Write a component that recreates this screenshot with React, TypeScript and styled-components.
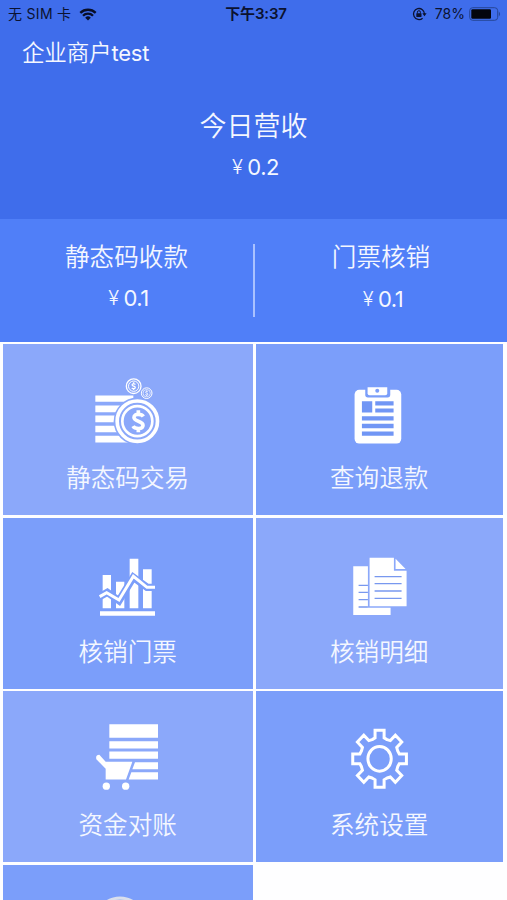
import React from "react";
import styled, { createGlobalStyle } from "styled-components";

const GlobalStyle = createGlobalStyle`
  * { box-sizing: border-box; }
  html, body { margin: 0; padding: 0; background: #fff; }
  body { overflow: hidden; font-family: Inter, "Noto Sans CJK SC", sans-serif; }
`;

const Screen = styled.main`
  width: 507px;
  height: 900px;
  overflow: hidden;
  background: #fefeff;
  color: #f4f7ff;
`;

const Hero = styled.header`
  height: 219px;
  background: #3f6deb;
`;

const StatusBar = styled.div`
  height: 28px;
  display: grid;
  grid-template-columns: 1fr auto 1fr;
  align-items: center;
  padding: 0 6px 0 8px;
  color: #0b1230;
  font-size: 14px;
  line-height: 28px;
`;

const StatusGroup = styled.div<{ $end?: boolean }>`
  display: flex;
  align-items: center;
  justify-content: ${(p) => (p.$end ? "flex-end" : "flex-start")};
  gap: ${(p) => (p.$end ? 4 : 8)}px;
  white-space: pre;

  svg:first-child {
    margin-right: 4px;
  }
`;

const CarrierName = styled.span`
  letter-spacing: 0.3px;
`;

const Clock = styled.div`
  font-size: 15px;
  font-weight: 600;
  letter-spacing: -0.15px;
  padding-left: 3px;
`;

const Merchant = styled.h1`
  margin: 9px 0 0 22px;
  font-size: 22.5px;
  line-height: 32px;
  font-weight: 350;
  letter-spacing: -0.15px;
`;

const MerchantCode = styled.span`
  font-size: 22px;
  font-weight: 400;
  letter-spacing: -0.2px;
`;

const Figure = styled.div<{ $top: number }>`
  display: flex;
  flex-direction: column;
  align-items: center;
  padding-top: ${(p) => p.$top}px;
`;

const FigureName = styled.div<{ $size: number }>`
  font-size: ${(p) => p.$size}px;
  line-height: 36px;
  font-weight: 350;
`;

const Amount = styled.div<{ $gap: number }>`
  display: flex;
  gap: 5px;
  margin-top: ${(p) => p.$gap}px;
  padding-left: 4px;
  font-size: 22px;
  line-height: 30px;
  font-weight: 400;
  letter-spacing: -0.5px;
`;

const Currency = styled.span`
  font-size: 20px;
  font-weight: 350;
`;

const Summary = styled.section`
  height: 123px;
  display: grid;
  grid-template-columns: 253px 2px 1fr;
  background: #507ff8;
`;

const Divider = styled.div`
  height: 73px;
  margin-top: 25px;
  background: #a9c1ff;
`;

const Tiles = styled.section`
  display: grid;
  grid-template-columns: 249.5px 247.5px;
  grid-auto-rows: 170.75px;
  gap: 2.75px 3px;
  padding: 2.4px 3.4px;
`;

const Tile = styled.div<{ $light?: boolean }>`
  display: flex;
  flex-direction: column;
  align-items: center;
  padding-top: 28.6px;
  background: ${(p) => (p.$light ? "#8ba8fa" : "#7b9efa")};
`;

const TileName = styled.div`
  margin: 7.4px 1px 0 0;
  font-size: 24.6px;
  line-height: 36px;
  font-weight: 350;
`;

const TileIcon = styled.svg`
  display: block;
  flex: none;
  width: 90px;
  height: 80px;
  overflow: visible;
`;

const WifiIcon = () => (
  <svg width="18" height="13" viewBox="0 0 18 13" fill="none" stroke="#080e28" strokeWidth="2.3">
    <path d="M1.3 4.9a11 11 0 0 1 15.4 0M4 7.8a7 7 0 0 1 10 0" />
    <path d="M6.2 9.7a4 4 0 0 1 5.6 0L9 12.5z" fill="#080e28" stroke="none" />
  </svg>
);

const RotationLockIcon = () => (
  <svg width="15" height="14" viewBox="0 0 15 14" fill="none" stroke="#0b1230">
    <path d="M10.6 11.2A5.5 5.5 0 1 1 12.5 7" strokeWidth="1.3" />
    <path d="M10.3 6.3h4.3l-2.1 2.9z" fill="#0b1230" stroke="none" />
    <rect x="4.3" y="6.2" width="5.2" height="3.8" rx=".4" fill="#0b1230" stroke="none" />
    <path d="M5.4 6.5V5.2a1.5 1.5 0 0 1 3 0v1.3" strokeWidth="1" />
  </svg>
);

const BatteryIcon = () => (
  <svg width="32" height="14" viewBox="0 0 32 14">
    <rect x=".7" y=".7" width="28" height="12.6" rx="3" fill="none" stroke="#264697" strokeWidth="1" />
    <rect x="2.3" y="2.3" width="19.7" height="9.4" rx="1.2" fill="#03050d" />
    <path d="M29.8 4.6q2.6 2.4 0 4.8z" fill="#264697" />
  </svg>
);

const Dollar = ({ x, y, scale = 1, width = 8 }: { x: number; y: number; scale?: number; width?: number }) => (
  <path
    transform={`translate(${x} ${y}) scale(${scale})`}
    d="M15-14C11-21-13-25-13-11C-13 2 14-2 14 12C14 26-11 24-16 15M0-33V-22M0 22V33"
    fill="none"
    stroke="#fff"
    strokeWidth={width}
  />
);

const CoinsIcon = () => (
  <TileIcon viewBox="9 22.5 270 240" fill="#fff">
    <path d="M46 90H160V109H46zM46 120H140V140H46zM46 150H130V170H46zM46 181H130V200H46zM46 211H150V231H46z" />
    <circle cx="172" cy="167" r="71" fill="#8ba8fa" />
    <circle cx="172" cy="167" r="60.5" fill="none" stroke="#fff" strokeWidth="11" />
    <circle cx="172" cy="167" r="45" fill="none" stroke="#fff" strokeWidth="8" />
    <Dollar x={175} y={167} width={11} />
    <circle cx="161" cy="62" r="22" fill="none" stroke="#fff" strokeWidth="4" />
    <circle cx="161" cy="62" r="15.5" fill="none" stroke="#fff" strokeWidth="3" />
    <Dollar x={161} y={62} scale={0.35} width={11} />
    <circle cx="200" cy="83" r="16" fill="none" stroke="#fff" strokeWidth="3" />
    <circle cx="200" cy="83" r="11" fill="none" stroke="#fff" strokeWidth="2" />
    <Dollar x={200} y={83} scale={0.25} width={11} />
  </TileIcon>
);

const ClipboardIcon = () => (
  <TileIcon viewBox="-15.75 -7.5 270 240" fill="#fff">
    <rect x="43" y="43" width="140" height="161" rx="14" />
    <path d="M75 40H150V58Q150 66 142 66H83Q75 66 75 58z" fill="#7b9efa" />
    <path d="M82 35H141V53Q141 59 135 59H88Q82 59 82 53z" />
    <circle cx="111" cy="46" r="6" fill="#7b9efa" />
    <path d="M65 77H96V111H65zM105 77H160V90H105zM105 99H160V111H105zM65 122H160V135H65zM65 145H160V158H65zM65 168H160V181H65z" fill="#7196f5" />
  </TileIcon>
);

const ChartIcon = () => (
  <TileIcon viewBox="-21 -12 270 240" fill="#fff">
    <path d="M38 75H63V175H38zM78 95H103V175H78zM119 26H145V175H119zM159 58H185V175H159zM30 184H195V197H30z" />
    <path d="M29 140L52 127L87 152L130 82L171 112H195" fill="none" stroke="#7b9efa" strokeWidth="22" />
    <path d="M29 140L50 128L87 150L130 79L171 112H195" fill="none" stroke="#fff" strokeWidth="9" />
  </TileIcon>
);

const DocumentsIcon = () => (
  <TileIcon viewBox="-15.75 -12 270 240" fill="#fff">
    <path d="M39 49H83V173H151V195H39z" />
    <path d="M88 23H161V62H199V169H88z" />
    <path d="M166 26L196 57H166z" />
    <path
      d="M103 80H184M103 101H184M103 123H184M103 145H184M55 106H83M55 127H83M55 149H83M55 171H83"
      stroke="#7898ef"
      strokeWidth="4"
    />
  </TileIcon>
);

const CartIcon = () => (
  <TileIcon viewBox="-6 13.5 270 240" fill="#fff">
    <path d="M73 26H219V67H73zM73 77H219V99H73zM73 108H219V130H73zM150 140H219V161H142zM139 170H219V192H131z" />
    <path d="M62 139H142L123 192H62V160L34 131Q31 118 43 118L62 139z" />
    <circle cx="64" cy="212" r="11" />
    <circle cx="122" cy="212" r="11" />
  </TileIcon>
);

const toothOutline = [
  [-23, -56],
  [-14, -61],
  [-14, -83],
  [14, -83],
  [14, -61],
  [23, -56],
];

const gearPoints = Array.from({ length: 8 }, (_, tooth) => {
  const angle = (tooth * Math.PI) / 4;
  return toothOutline.map(([x, y]) =>
    [
      118 + 0.97 * (x * Math.cos(angle) - y * Math.sin(angle)),
      115 + 1.03 * (x * Math.sin(angle) + y * Math.cos(angle)),
    ].join(","),
  );
})
  .flat()
  .join(" ");

const GearIcon = () => (
  <TileIcon viewBox="-15.75 -1.5 270 240" fill="none" stroke="#fff" strokeWidth="9">
    <polygon points={gearPoints} />
    <ellipse cx="118" cy="115" rx="35" ry="37" />
  </TileIcon>
);

const BadgeIcon = () => (
  <TileIcon viewBox="0 0 90 80" fill="none">
    <circle cx="37" cy="29.5" r="24.5" fill="#9eb5ef" stroke="#d9dfec" strokeWidth="3" />
  </TileIcon>
);

const tiles = [
  { name: "静态码交易", icon: <CoinsIcon />, light: true },
  { name: "查询退款", icon: <ClipboardIcon /> },
  { name: "核销门票", icon: <ChartIcon /> },
  { name: "核销明细", icon: <DocumentsIcon />, light: true },
  { name: "资金对账", icon: <CartIcon />, light: true },
  { name: "系统设置", icon: <GearIcon /> },
];

const Money = ({ value, gap }: { value: string; gap: number }) => (
  <Amount $gap={gap}>
    <Currency>¥</Currency>
    <span>{value}</span>
  </Amount>
);

export default function App() {
  return (
    <Screen>
      <GlobalStyle />
      <Hero>
        <StatusBar>
          <StatusGroup>
            <CarrierName>无 SIM 卡</CarrierName>
            <WifiIcon />
          </StatusGroup>
          <Clock>下午3:37</Clock>
          <StatusGroup $end>
            <RotationLockIcon />
            78%
            <BatteryIcon />
          </StatusGroup>
        </StatusBar>
        <Merchant>
          企业商户<MerchantCode>test</MerchantCode>
        </Merchant>
        <Figure $top={40}>
          <FigureName $size={27}>今日营收</FigureName>
          <Money value="0.2" gap={7} />
        </Figure>
      </Hero>
      <Summary>
        <Figure $top={20}>
          <FigureName $size={24.6}>静态码收款</FigureName>
          <Money value="0.1" gap={8} />
        </Figure>
        <Divider />
        <Figure $top={20}>
          <FigureName $size={24.6}>门票核销</FigureName>
          <Money value="0.1" gap={9} />
        </Figure>
      </Summary>
      <Tiles>
        {tiles.map((tile) => (
          <Tile key={tile.name} $light={tile.light}>
            {tile.icon}
            <TileName>{tile.name}</TileName>
          </Tile>
        ))}
        <Tile>
          <BadgeIcon />
        </Tile>
      </Tiles>
    </Screen>
  );
}
